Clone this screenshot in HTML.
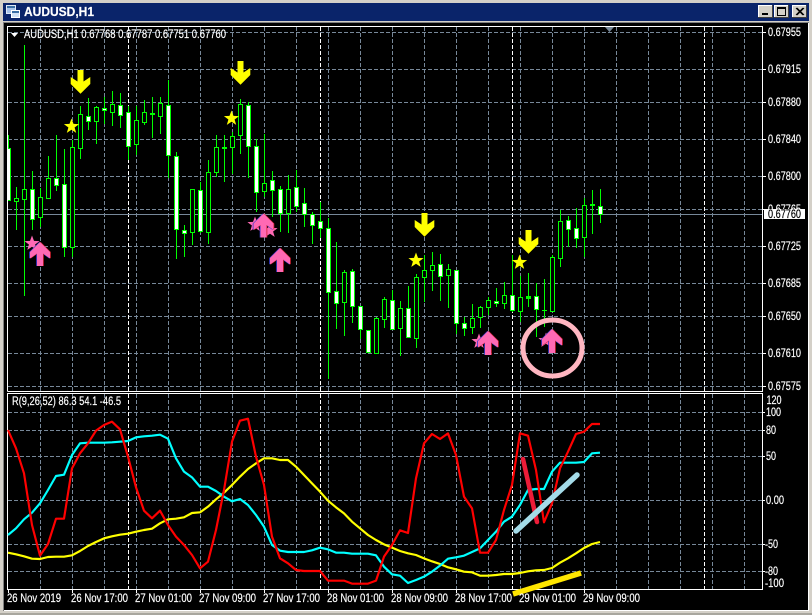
<!DOCTYPE html>
<html><head><meta charset="utf-8"><title>AUDUSD,H1</title>
<style>
html,body{margin:0;padding:0;background:#d4d0c8;width:812px;height:615px;overflow:hidden}
svg{display:block;position:absolute;left:0;top:0}
text{font-family:"Liberation Sans",sans-serif;font-size:11.500px;fill:#fff;stroke:#fff;stroke-width:.18}
.c{shape-rendering:crispEdges}
.w{fill:#fff;stroke:#0f0}
.h{fill:#000;stroke:#0f0}
.d{fill:#0f0}
</style></head><body>
<svg width="812" height="615" viewBox="0 0 812 615">
<defs>
<polygon id="down" points="-3,0 3,0 3,11.500 9.800,7 9.800,14 0,23.800 -9.800,14 -9.800,7 -3,11.500"/>
<polygon id="up" points="0,0 10,10 10,16.500 3,11.500 3,24 -3,24 -3,11.500 -10,16.500 -10,10"/>
<polygon id="star" points="0,-8 2,-2.600 7.600,-2.400 3.100,1 4.700,6.400 0,3.300 -4.700,6.400 -3.100,1 -7.600,-2.400 -2,-2.600"/>
<g id="pup"><use href="#up" x="-.8" fill="#3a3ad0"/><use href="#up" x=".8" fill="#d02030"/><use href="#up" fill="#ff69b4"/></g>
<clipPath id="cp"><rect x="8" y="27" width="754" height="364"/></clipPath>
</defs>
<!-- window -->
<rect width="812" height="615" fill="#d4d0c8"/>
<rect x="0" y="613" width="812" height="2" fill="#a8a69e"/>
<rect x="3" y="3" width="806" height="18" fill="#0a246a"/>
<rect x="3" y="21" width="806" height="1" fill="#d4d0c8"/>
<rect x="3" y="22" width="806" height="1" fill="#808080"/>
<rect x="3" y="23" width="1" height="588" fill="#808080"/>
<rect x="4" y="23" width="804" height="587" fill="#000"/>
<rect x="4" y="610" width="805" height="1" fill="#fff"/>
<rect x="808" y="23" width="1" height="588" fill="#fff"/>
<!-- title icon -->
<g class="c">
<rect x="6.500" y="5.500" width="9" height="8" fill="#a9c4ea" stroke="#dfe9f6"/>
<rect x="7" y="6" width="8" height="2" fill="#3a6ea5"/>
<rect x="11.500" y="10.500" width="8" height="7" fill="#cfe0f5" stroke="#fff"/>
<rect x="12" y="11" width="7" height="2" fill="#3a6ea5"/>
</g>
<text x="24" y="16" textLength="70" lengthAdjust="spacingAndGlyphs" style="font-size:13px;font-weight:bold">AUDUSD,H1</text>
<!-- buttons -->
<g class="c">
<rect x="758" y="5" width="15" height="13" fill="#d4d0c8"/><path d="M758.500 18V5.500H773" stroke="#fff" fill="none"/><path d="M758 17.500H772.500V5" stroke="#404040" fill="none"/>
<rect x="762" y="13" width="6" height="2" fill="#000"/>
<rect x="774" y="5" width="15" height="13" fill="#d4d0c8"/><path d="M774.500 18V5.500H789" stroke="#fff" fill="none"/><path d="M774 17.500H788.500V5" stroke="#404040" fill="none"/>
<rect x="777.500" y="7.500" width="8" height="8" fill="none" stroke="#000"/><rect x="777" y="7" width="9" height="2" fill="#000"/>
<rect x="792" y="5" width="15" height="13" fill="#d4d0c8"/><path d="M792.500 18V5.500H807" stroke="#fff" fill="none"/><path d="M792 17.500H806.500V5" stroke="#404040" fill="none"/>
</g>
<path d="M796 8L803 15M797 8L804 15M803 8L796 15M804 8L797 15" stroke="#000" stroke-width="1"/>
<!-- grid -->
<g class="c" fill="none">
<path stroke="#778899" stroke-dasharray="4 2" d="M8 32.500H762M8 69.500H762M8 102.500H762M8 139.500H762M8 176.500H762M8 209.500H762M8 246.500H762M8 283.500H762M8 316.500H762M8 353.500H762M8 386.500H762M8 412.500H762M8 430.500H762M8 456.500H762M8 500.500H762M8 544.500H762M8 571.500H762"/>
<path stroke="#778899" stroke-dasharray="4 2" d="M40.500 27V391M72.500 27V391M104.500 27V391M136.500 27V391M168.500 27V391M200.500 27V391M232.500 27V391M264.500 27V391M296.500 27V391M328.500 27V391M360.500 27V391M392.500 27V391M424.500 27V391M456.500 27V391M488.500 27V391M520.500 27V391M552.500 27V391M584.500 27V391M616.500 27V391M648.500 27V391M680.500 27V391M712.500 27V391M744.500 27V391"/>
<path stroke="#778899" stroke-dasharray="4 2" d="M40.500 394V589M72.500 394V589M104.500 394V589M136.500 394V589M168.500 394V589M200.500 394V589M232.500 394V589M264.500 394V589M296.500 394V589M328.500 394V589M360.500 394V589M392.500 394V589M424.500 394V589M456.500 394V589M488.500 394V589M520.500 394V589M552.500 394V589M584.500 394V589M616.500 394V589M648.500 394V589M680.500 394V589M712.500 394V589M744.500 394V589"/>
<path stroke="#fff" stroke-dasharray="4 2" d="M128.500 27V391M320.500 27V391M512.500 27V391M704.500 27V391M128.500 394V589M320.500 394V589M512.500 394V589M704.500 394V589"/>
<path stroke="#778899" d="M8 214.500H762"/>
</g>
<!-- candles -->
<g class="c" clip-path="url(#cp)">
<path stroke="#0f0" fill="none" d="M8.500 135V201M16.500 187V230M24.500 45V296M32.500 171V230M40.500 188V227M48.500 156V198M56.500 135V191M64.500 149V257M72.500 140V257M80.500 106V159M88.500 98V130M96.500 106V144M104.500 97V124M112.500 91V126M120.500 93V128M128.500 106V160M136.500 106V155M144.500 100V125M152.500 97V138M160.500 97V134M168.500 80V178M176.500 152V259M184.500 225V257M192.500 189V245M200.500 182V233M208.500 160V244M216.500 135V177M224.500 135V182M232.500 132V174M240.500 99V154M248.500 102V178M256.500 139V212M264.500 134V197M272.500 171V217M280.500 186V232M288.500 175V233M296.500 170V212M304.500 188V227M312.500 212V244M320.500 202V238M328.500 218V379M336.500 242V329M344.500 270V336M352.500 269V323M360.500 306V339M368.500 330V352M376.500 317V353M384.500 297V328M392.500 290V330M400.500 301V356M408.500 286V337M416.500 274V348M424.500 255V302M432.500 252V291M440.500 254V301M448.500 264V308M456.500 270V334M464.500 317V336M472.500 304V334M480.500 306V328M488.500 297V315M496.500 288V307M504.500 282V309M512.500 255V312M520.500 276V322M528.500 273V307M536.500 283V337M544.500 279V327M552.500 255V311M560.500 210V267M568.500 216V247M576.500 208V248M584.500 198V257M592.500 190V234M600.500 189V223"/>
<rect class="w" x="6.500" y="148.500" width="4" height="52"/>
<rect class="h" x="14.500" y="198.500" width="4" height="3"/>
<rect class="h" x="22.500" y="189.500" width="4" height="10"/>
<rect class="w" x="30.500" y="189.500" width="4" height="30"/>
<rect class="h" x="38.500" y="197.500" width="4" height="20"/>
<rect class="h" x="46.500" y="178.500" width="4" height="20"/>
<rect class="w" x="54.500" y="178.500" width="4" height="7"/>
<rect class="w" x="62.500" y="184.500" width="4" height="63"/>
<rect class="h" x="70.500" y="147.500" width="4" height="100"/>
<rect class="h" x="78.500" y="114.500" width="4" height="34"/>
<rect class="w" x="86.500" y="116.500" width="4" height="5"/>
<rect class="h" x="94.500" y="107.500" width="4" height="14"/>
<rect class="w" x="102.500" y="108.500" width="4" height="2"/>
<rect class="h" x="110.500" y="104.500" width="4" height="8"/>
<rect class="w" x="118.500" y="105.500" width="4" height="10"/>
<rect class="w" x="126.500" y="112.500" width="4" height="34"/>
<rect class="h" x="134.500" y="120.500" width="4" height="24"/>
<rect class="h" x="142.500" y="112.500" width="4" height="10"/>
<rect class="d" x="150" y="113" width="5" height="2"/>
<rect class="h" x="158.500" y="103.500" width="4" height="13"/>
<rect class="w" x="166.500" y="105.500" width="4" height="50"/>
<rect class="w" x="174.500" y="156.500" width="4" height="73"/>
<rect class="w" x="182.500" y="230.500" width="4" height="3"/>
<rect class="h" x="190.500" y="189.500" width="4" height="43"/>
<rect class="w" x="198.500" y="190.500" width="4" height="41"/>
<rect class="h" x="206.500" y="172.500" width="4" height="60"/>
<rect class="h" x="214.500" y="147.500" width="4" height="25"/>
<rect class="d" x="222" y="147" width="5" height="2"/>
<rect class="h" x="230.500" y="136.500" width="4" height="11"/>
<rect class="h" x="238.500" y="104.500" width="4" height="31"/>
<rect class="w" x="246.500" y="105.500" width="4" height="41"/>
<rect class="w" x="254.500" y="146.500" width="4" height="46"/>
<rect class="h" x="262.500" y="183.500" width="4" height="8"/>
<rect class="w" x="270.500" y="180.500" width="4" height="10"/>
<rect class="w" x="278.500" y="189.500" width="4" height="24"/>
<rect class="h" x="286.500" y="189.500" width="4" height="24"/>
<rect class="w" x="294.500" y="187.500" width="4" height="19"/>
<rect class="w" x="302.500" y="203.500" width="4" height="11"/>
<rect class="w" x="310.500" y="214.500" width="4" height="11"/>
<rect class="w" x="318.500" y="221.500" width="4" height="7"/>
<rect class="w" x="326.500" y="228.500" width="4" height="64"/>
<rect class="w" x="334.500" y="291.500" width="4" height="12"/>
<rect class="h" x="342.500" y="272.500" width="4" height="30"/>
<rect class="w" x="350.500" y="271.500" width="4" height="35"/>
<rect class="w" x="358.500" y="306.500" width="4" height="23"/>
<rect class="w" x="366.500" y="330.500" width="4" height="22"/>
<rect class="h" x="374.500" y="318.500" width="4" height="35"/>
<rect class="h" x="382.500" y="299.500" width="4" height="20"/>
<rect class="w" x="390.500" y="300.500" width="4" height="29"/>
<rect class="h" x="398.500" y="308.500" width="4" height="20"/>
<rect class="w" x="406.500" y="308.500" width="4" height="29"/>
<rect class="h" x="414.500" y="277.500" width="4" height="61"/>
<rect class="h" x="422.500" y="270.500" width="4" height="7"/>
<rect class="h" x="430.500" y="265.500" width="4" height="5"/>
<rect class="w" x="438.500" y="264.500" width="4" height="12"/>
<rect class="h" x="446.500" y="269.500" width="4" height="6"/>
<rect class="w" x="454.500" y="270.500" width="4" height="53"/>
<rect class="w" x="462.500" y="323.500" width="4" height="5"/>
<rect class="h" x="470.500" y="318.500" width="4" height="9"/>
<rect class="h" x="478.500" y="307.500" width="4" height="10"/>
<rect class="h" x="486.500" y="300.500" width="4" height="7"/>
<rect class="w" x="494.500" y="301.500" width="4" height="2"/>
<rect class="h" x="502.500" y="295.500" width="4" height="8"/>
<rect class="w" x="510.500" y="295.500" width="4" height="15"/>
<rect class="h" x="518.500" y="297.500" width="4" height="14"/>
<rect class="d" x="526" y="296" width="5" height="3"/>
<rect class="w" x="534.500" y="296.500" width="4" height="13"/>
<rect class="d" x="542" y="310" width="5" height="1"/>
<rect class="h" x="550.500" y="257.500" width="4" height="54"/>
<rect class="h" x="558.500" y="221.500" width="4" height="37"/>
<rect class="w" x="566.500" y="220.500" width="4" height="9"/>
<rect class="w" x="574.500" y="228.500" width="4" height="10"/>
<rect class="h" x="582.500" y="205.500" width="4" height="32"/>
<rect class="d" x="590" y="204" width="5" height="2"/>
<rect class="w" x="598.500" y="206.500" width="4" height="8"/>
</g>
<!-- frames -->
<g class="c" fill="none" stroke="#fff">
<path d="M7.500 391.500V26.500H762.500V391.500H7.500"/>
<path d="M7.500 393.500H762.500V589.500H7.500Z"/>
<path d="M762 32.500h4M762 69.500h4M762 102.500h4M762 139.500h4M762 176.500h4M762 209.500h4M762 246.500h4M762 283.500h4M762 316.500h4M762 353.500h4M762 386.500h4"/>
<path d="M8.500 590V593M72.500 590V593M136.500 590V593M200.500 590V593M264.500 590V593M328.500 590V593M392.500 590V593M456.500 590V593M520.500 590V593M584.500 590V593"/>
<path d="M762 412.500h3M762 430.500h3M762 456.500h3M762 500.500h3M762 544.500h3M762 571.500h3"/>
</g>
<polygon points="605,27 614,27 609.500,32" fill="#778899"/>
<polygon points="11,33 18,33 14.500,37" fill="#fff"/>
<!-- markers -->
<g fill="#ff0">
<use href="#down" x="80.500" y="70"/><use href="#down" x="240.500" y="61"/><use href="#down" x="424.500" y="213"/><use href="#down" x="528.500" y="230"/>
<use href="#star" x="71.500" y="126.500"/><use href="#star" x="231.500" y="118.500"/><use href="#star" x="416" y="260.500"/><use href="#star" x="519.500" y="262.500"/>
</g>
<g fill="#ff69b4">
<use href="#star" x="32" y="243.500"/><use href="#star" x="255" y="224.500"/><use href="#star" x="270" y="230.500"/><use href="#star" x="479" y="341.500"/><use href="#star" x="546" y="340.500"/>
</g>
<use href="#pup" x="40" y="242"/><use href="#pup" x="263.500" y="213.500"/><use href="#pup" x="280" y="248"/><use href="#pup" x="488" y="331"/><use href="#pup" x="552" y="329"/>
<ellipse cx="552.500" cy="348" rx="29.500" ry="28" fill="none" stroke="#ffb6c1" stroke-width="5"/>
<!-- indicator lines -->
<g transform="translate(0 390) scale(.33333)" fill="none" stroke-width="6.500" stroke-linejoin="round">
<polyline stroke="#ff0" points="24,488 48,493 72,499 96,506 120,507 144,501 168,500 192,500 216,496 240,483 264,468 288,456 312,445 336,439 360,434 384,431 408,425 432,420 456,416 480,400 504,388 528,386 552,382 576,369 600,367 624,350 648,328 672,308 696,285 720,260 744,237 768,220 792,205 816,205 840,210 864,210 888,230 912,255 936,280 960,305 984,332 1008,352 1032,370 1056,395 1080,415 1104,435 1128,450 1152,463 1176,473 1200,483 1224,490 1248,495 1272,505 1296,514 1320,522 1344,532 1368,538 1392,545 1416,547 1440,557 1464,557 1488,555 1512,552 1536,552 1560,549 1584,544 1608,541 1632,540 1656,534 1680,518 1704,505 1728,490 1752,474 1776,462 1800,456"/>
<polyline stroke="#0ff" points="24,435 48,415 72,388 96,368 120,340 144,300 168,258 192,254 216,195 240,160 264,158 288,158 312,158 336,157 360,155 384,153 408,142 432,139 456,137 480,134 504,146 528,205 552,245 576,262 600,290 624,290 648,303 672,320 696,334 720,327 744,345 768,375 792,410 816,465 840,482 864,486 888,486 912,486 936,481 960,473 984,478 1008,488 1032,488 1056,491 1080,491 1104,491 1128,496 1152,530 1176,553 1200,557 1224,579 1248,570 1272,560 1296,545 1320,527 1344,506 1368,502 1392,497 1416,486 1440,475 1464,450 1488,425 1512,395 1536,380 1560,345 1584,300 1608,297 1632,297 1656,245 1680,218 1704,218 1728,218 1752,216 1776,190 1800,188"/>
<polyline stroke="#f00" points="24,120 48,175 72,250 96,405 120,497 144,462 168,386 192,386 216,235 240,190 264,160 288,122 312,105 336,95 360,118 384,200 408,292 432,362 456,385 480,362 504,405 528,440 552,465 576,495 600,535 624,515 648,420 672,300 696,155 720,92 744,86 768,200 792,285 816,440 840,505 864,520 888,540 912,543 936,543 960,543 984,572 1008,572 1032,572 1056,581 1080,581 1104,581 1128,572 1152,500 1176,465 1200,421 1224,429 1248,265 1272,160 1296,132 1320,147 1344,130 1368,195 1392,320 1416,355 1440,488 1464,488 1488,450 1512,360 1536,285 1560,130 1584,137 1608,240 1632,397 1656,340 1680,235 1704,185 1728,132 1752,125 1776,102 1800,102"/>
</g>
<g fill="none" stroke-linecap="round">
<line x1="523" y1="459" x2="537" y2="522" stroke="#ed1c38" stroke-width="4.500"/>
<line x1="516" y1="531" x2="577" y2="475" stroke="#a4dbe8" stroke-width="5.500"/>
<line x1="513" y1="594" x2="581" y2="573" stroke="#ffe600" stroke-width="5.500" stroke-linecap="butt"/>
</g>
<!-- legends -->
<text x="24" y="38" textLength="202" lengthAdjust="spacingAndGlyphs">AUDUSD,H1  0.67768 0.67787 0.67751 0.67760</text>
<text x="12" y="405" textLength="109" lengthAdjust="spacingAndGlyphs">R(9,26,52) 86.3 54.1 -46.5</text>
<!-- price axis -->
<g>
<text x="768" y="36" textLength="33" lengthAdjust="spacingAndGlyphs">0.67955</text>
<text x="768" y="73" textLength="33" lengthAdjust="spacingAndGlyphs">0.67915</text>
<text x="768" y="106" textLength="33" lengthAdjust="spacingAndGlyphs">0.67880</text>
<text x="768" y="143" textLength="33" lengthAdjust="spacingAndGlyphs">0.67840</text>
<text x="768" y="180" textLength="33" lengthAdjust="spacingAndGlyphs">0.67800</text>
<text x="768" y="213" textLength="33" lengthAdjust="spacingAndGlyphs">0.67765</text>
<rect class="c" x="764" y="209" width="41" height="10" fill="#fff"/>
<text x="768" y="218" textLength="33" lengthAdjust="spacingAndGlyphs" style="fill:#000;stroke:#000">0.67760</text>
<text x="768" y="250" textLength="33" lengthAdjust="spacingAndGlyphs">0.67725</text>
<text x="768" y="287" textLength="33" lengthAdjust="spacingAndGlyphs">0.67685</text>
<text x="768" y="320" textLength="33" lengthAdjust="spacingAndGlyphs">0.67650</text>
<text x="768" y="357" textLength="33" lengthAdjust="spacingAndGlyphs">0.67610</text>
<text x="768" y="390" textLength="33" lengthAdjust="spacingAndGlyphs">0.67575</text>
<text x="766.500" y="404" textLength="15" lengthAdjust="spacingAndGlyphs">120</text>
<text x="766" y="416" textLength="15" lengthAdjust="spacingAndGlyphs">100</text>
<text x="766" y="434" textLength="10" lengthAdjust="spacingAndGlyphs">80</text>
<text x="766" y="460" textLength="10" lengthAdjust="spacingAndGlyphs">50</text>
<text x="766" y="504" textLength="18" lengthAdjust="spacingAndGlyphs">0.00</text>
<text x="765" y="548" textLength="13" lengthAdjust="spacingAndGlyphs">-50</text>
<text x="765" y="575" textLength="13" lengthAdjust="spacingAndGlyphs">-80</text>
<text x="765" y="587" textLength="19" lengthAdjust="spacingAndGlyphs">-100</text>
</g>
<!-- time axis -->
<g>
<text x="7" y="602" textLength="54" lengthAdjust="spacingAndGlyphs">26 Nov 2019</text>
<text x="71" y="602" textLength="57" lengthAdjust="spacingAndGlyphs">26 Nov 17:00</text>
<text x="135" y="602" textLength="57" lengthAdjust="spacingAndGlyphs">27 Nov 01:00</text>
<text x="199" y="602" textLength="57" lengthAdjust="spacingAndGlyphs">27 Nov 09:00</text>
<text x="263" y="602" textLength="57" lengthAdjust="spacingAndGlyphs">27 Nov 17:00</text>
<text x="327" y="602" textLength="57" lengthAdjust="spacingAndGlyphs">28 Nov 01:00</text>
<text x="391" y="602" textLength="57" lengthAdjust="spacingAndGlyphs">28 Nov 09:00</text>
<text x="455" y="602" textLength="57" lengthAdjust="spacingAndGlyphs">28 Nov 17:00</text>
<text x="519" y="602" textLength="57" lengthAdjust="spacingAndGlyphs">29 Nov 01:00</text>
<text x="583" y="602" textLength="57" lengthAdjust="spacingAndGlyphs">29 Nov 09:00</text>
</g>
</svg>
</body></html>
